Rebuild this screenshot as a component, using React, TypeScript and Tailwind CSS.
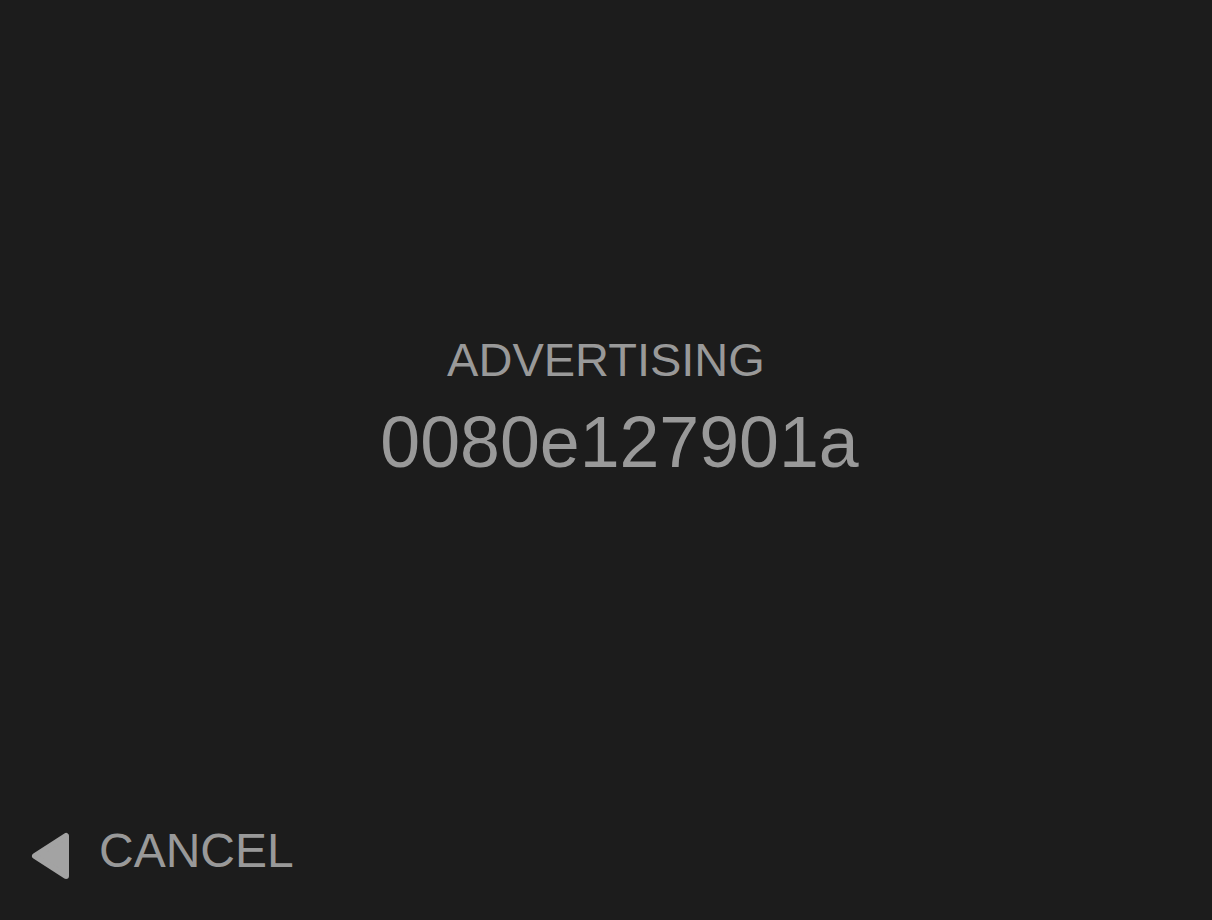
export default function App() {
  return (
    <div
      className="flex h-[920px] w-full flex-col bg-[#1c1c1c] text-[#999999]"
      style={{ fontFamily: '"Liberation Sans", Arial, sans-serif' }}
    >
      {/* Advertising id */}
      <div className="flex flex-col items-center pt-[336px]">
        <div className="text-[47px] leading-[48px]">ADVERTISING</div>
        <div className="mt-[22px] pl-[27px] text-[71.7px] leading-[72px]">0080e127901a</div>
      </div>

      <div className="flex-1" />

      {/* Cancel */}
      <div className="flex items-start gap-[28px] pb-[40px] pl-[31px]">
        <svg width="40" height="48" viewBox="0 0 40 48" className="mt-[5px]">
          <polygon
            points="4,24 35,4 35,44"
            fill="#a3a3a3"
            stroke="#a3a3a3"
            strokeWidth="6"
            strokeLinejoin="round"
          />
        </svg>
        <div className="text-[48px] leading-[48px]">CANCEL</div>
      </div>
    </div>
  );
}
